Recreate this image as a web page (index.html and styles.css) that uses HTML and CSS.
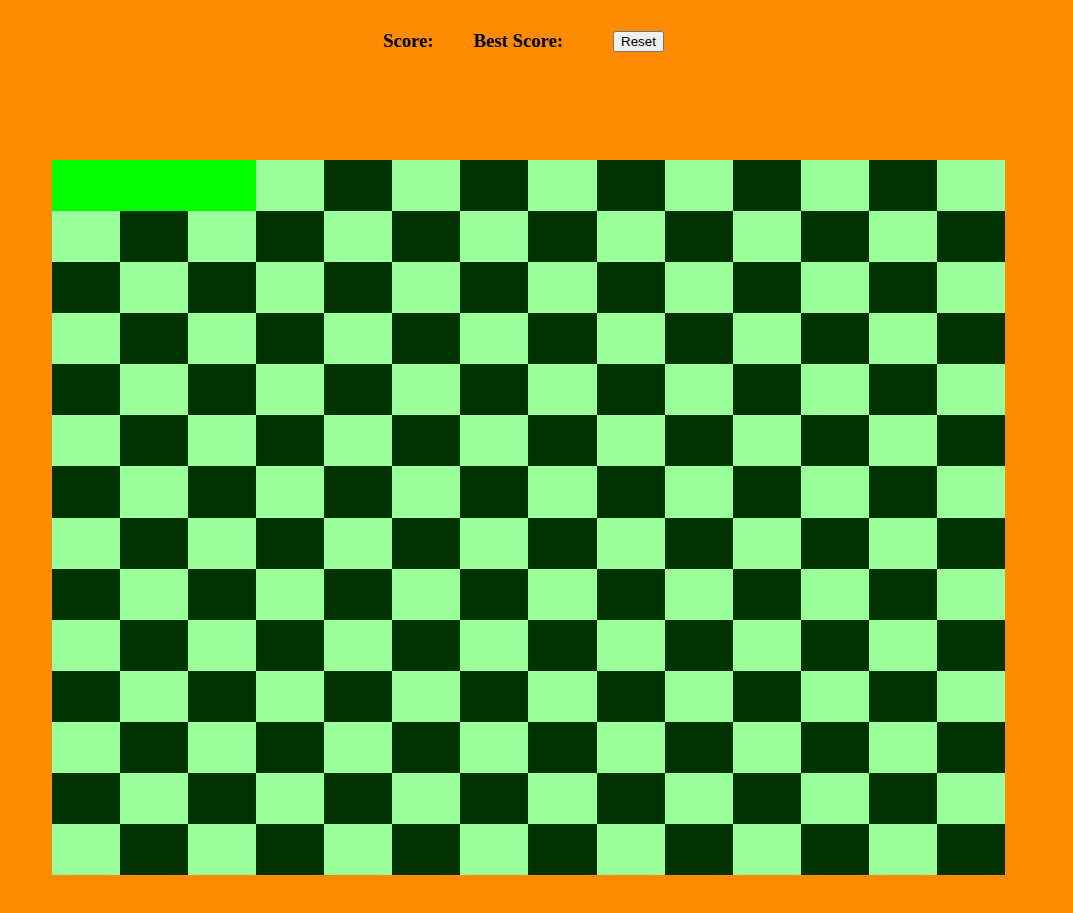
FILE: index.html
```html
<!DOCTYPE html>
<html>
<head>
<meta charset="utf-8">
<link rel="stylesheet" href="styles.css">
</head>
<body>
<div class="header">
  <span class="label score">Score:</span>
  <span class="label best">Best Score:</span>
  <button class="reset">Reset</button>
</div>
<div class="board">
<div class="s"></div><div class="s"></div><div class="s"></div><div class="l"></div><div class="d"></div><div class="l"></div><div class="d"></div><div class="l"></div><div class="d"></div><div class="l"></div><div class="d"></div><div class="l"></div><div class="d"></div><div class="l"></div>
<div class="l"></div><div class="d"></div><div class="l"></div><div class="d"></div><div class="l"></div><div class="d"></div><div class="l"></div><div class="d"></div><div class="l"></div><div class="d"></div><div class="l"></div><div class="d"></div><div class="l"></div><div class="d"></div>
<div class="d"></div><div class="l"></div><div class="d"></div><div class="l"></div><div class="d"></div><div class="l"></div><div class="d"></div><div class="l"></div><div class="d"></div><div class="l"></div><div class="d"></div><div class="l"></div><div class="d"></div><div class="l"></div>
<div class="l"></div><div class="d"></div><div class="l"></div><div class="d"></div><div class="l"></div><div class="d"></div><div class="l"></div><div class="d"></div><div class="l"></div><div class="d"></div><div class="l"></div><div class="d"></div><div class="l"></div><div class="d"></div>
<div class="d"></div><div class="l"></div><div class="d"></div><div class="l"></div><div class="d"></div><div class="l"></div><div class="d"></div><div class="l"></div><div class="d"></div><div class="l"></div><div class="d"></div><div class="l"></div><div class="d"></div><div class="l"></div>
<div class="l"></div><div class="d"></div><div class="l"></div><div class="d"></div><div class="l"></div><div class="d"></div><div class="l"></div><div class="d"></div><div class="l"></div><div class="d"></div><div class="l"></div><div class="d"></div><div class="l"></div><div class="d"></div>
<div class="d"></div><div class="l"></div><div class="d"></div><div class="l"></div><div class="d"></div><div class="l"></div><div class="d"></div><div class="l"></div><div class="d"></div><div class="l"></div><div class="d"></div><div class="l"></div><div class="d"></div><div class="l"></div>
<div class="l"></div><div class="d"></div><div class="l"></div><div class="d"></div><div class="l"></div><div class="d"></div><div class="l"></div><div class="d"></div><div class="l"></div><div class="d"></div><div class="l"></div><div class="d"></div><div class="l"></div><div class="d"></div>
<div class="d"></div><div class="l"></div><div class="d"></div><div class="l"></div><div class="d"></div><div class="l"></div><div class="d"></div><div class="l"></div><div class="d"></div><div class="l"></div><div class="d"></div><div class="l"></div><div class="d"></div><div class="l"></div>
<div class="l"></div><div class="d"></div><div class="l"></div><div class="d"></div><div class="l"></div><div class="d"></div><div class="l"></div><div class="d"></div><div class="l"></div><div class="d"></div><div class="l"></div><div class="d"></div><div class="l"></div><div class="d"></div>
<div class="d"></div><div class="l"></div><div class="d"></div><div class="l"></div><div class="d"></div><div class="l"></div><div class="d"></div><div class="l"></div><div class="d"></div><div class="l"></div><div class="d"></div><div class="l"></div><div class="d"></div><div class="l"></div>
<div class="l"></div><div class="d"></div><div class="l"></div><div class="d"></div><div class="l"></div><div class="d"></div><div class="l"></div><div class="d"></div><div class="l"></div><div class="d"></div><div class="l"></div><div class="d"></div><div class="l"></div><div class="d"></div>
<div class="d"></div><div class="l"></div><div class="d"></div><div class="l"></div><div class="d"></div><div class="l"></div><div class="d"></div><div class="l"></div><div class="d"></div><div class="l"></div><div class="d"></div><div class="l"></div><div class="d"></div><div class="l"></div>
<div class="l"></div><div class="d"></div><div class="l"></div><div class="d"></div><div class="l"></div><div class="d"></div><div class="l"></div><div class="d"></div><div class="l"></div><div class="d"></div><div class="l"></div><div class="d"></div><div class="l"></div><div class="d"></div>
</div>
</body>
</html>
```
FILE: styles.css
```css
html, body {
  background: #ff8c00;
}
body {
  margin: 8px;
  font-family: "Liberation Serif", "Times New Roman", serif;
}
.header {
  display: flex;
  align-items: center;
  margin-top: 22px;
  padding-left: 375px;
}
.label {
  font-weight: bold;
  font-size: 18.72px;
  color: #000;
}
.score {
  margin-right: 40px;
}
.best {
  margin-right: 50px;
}
.reset {
  font-family: "Liberation Sans", Arial, sans-serif;
  font-size: 13.33px;
}
.board {
  margin-top: 108px;
  margin-left: 44px;
  width: 953px;
  height: 715px;
  display: grid;
  grid-template-columns: repeat(14, 1fr);
  grid-template-rows: repeat(14, 1fr);
}
.l { background: #99ff99; }
.d { background: #003300; }
.s { background: #00ff00; }
```
